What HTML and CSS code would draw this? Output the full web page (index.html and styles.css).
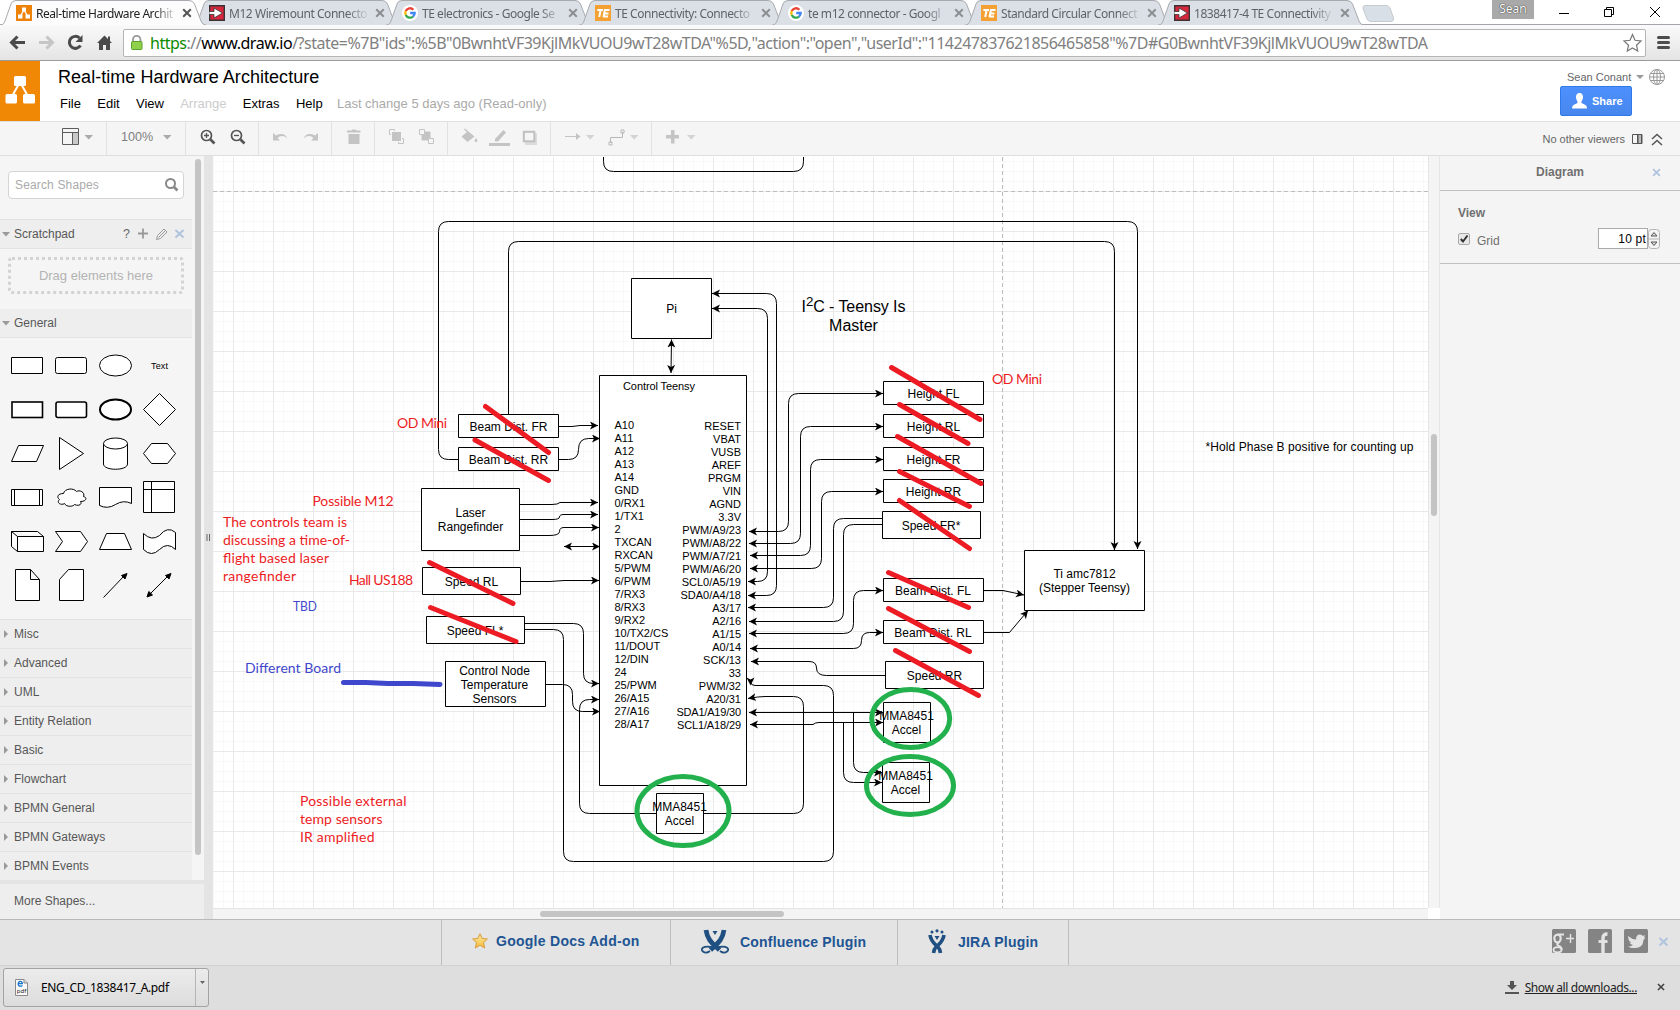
FILE: index.html
```html
<!DOCTYPE html>
<html lang="en">
<head>
<meta charset="utf-8">
<title>Real-time Hardware Architecture</title>
<link rel="stylesheet" href="styles.css">
</head>
<body>
<svg class="defs" width="0" height="0">
  <defs>
    <symbol id="tab-shape" viewBox="0 0 207 25"><path d="M0 25C3 25 4 23.500 5 21L11 4Q12 .5 16 .5H189Q193 .5 194.500 4L201 21Q202.500 25 206 25"/></symbol>
    <symbol id="x" viewBox="0 0 10 10"><path d="M1.200 1.200L8.800 8.800M8.800 1.200L1.200 8.800" fill="none" stroke="currentColor" stroke-width="2"/></symbol>
    <symbol id="fav-drawio" viewBox="0 0 16 16"><path fill="#ee8108" d="M0 0H16V16H0z"/><path stroke="#fff" stroke-width="1.300" fill="none" d="M8 5L4.500 11M8 5L11.500 11"/><path fill="#fff" d="M6 2.500h4v4H6zM2 9.500h4.500v4H2zM9.500 9.500H14v4H9.500z"/></symbol>
    <symbol id="fav-digikey" viewBox="0 0 16 16"><path fill="#d8263c" stroke="#3b3236" stroke-width="1.400" d="M.7.7H15.300V15.300H.7z"/><path fill="#fff" stroke="#3b3236" stroke-width=".8" d="M0 6.500H5V3L13.500 8L5 13V9.500H0z"/></symbol>
    <symbol id="fav-google" viewBox="0 0 16 16"><circle cx="8" cy="8" r="8" fill="#fff"/><g fill="none" stroke-width="2.300"><path stroke="#ea4335" d="M3.700 6.100A4.700 4.700 0 0 1 11.400 4.700"/><path stroke="#fbbc05" d="M3.800 10.100A4.700 4.700 0 0 1 3.700 6"/><path stroke="#34a853" d="M11.100 11.500A4.700 4.700 0 0 1 3.700 10"/><path stroke="#4285f4" d="M8.200 8H12.700A4.700 4.700 0 0 1 11 11.600"/></g></symbol>
    <symbol id="fav-te" viewBox="0 0 16 16"><path fill="#f4a032" d="M0 0H16V16H0z"/><path fill="none" stroke="#fff" stroke-width="2" d="M2.300 5H8M5.600 5L4.200 12M8.500 12L9.900 5H14.500M9.200 8.500H13.500M8.100 11.500H13"/></symbol>
    <marker id="arr" markerUnits="userSpaceOnUse" markerWidth="10" markerHeight="10" refX="8" refY="4" orient="auto-start-reverse"><path d="M0 0L8 4L0 8L2 4z"/></marker>
    <pattern id="grid" x="233" y="231" width="40" height="40" patternUnits="userSpaceOnUse">
      <path d="M10.500 0V40M20.500 0V40M30.500 0V40M0 10.500H40M0 20.500H40M0 30.500H40" stroke="#f8f8f8"/>
      <path d="M.5 0V40M0 .5H40" stroke="#e9e9e9"/>
    </pattern>
    <linearGradient id="gold" x2="0" y2="1"><stop stop-color="#fff0a0"/><stop offset="1" stop-color="#f3b93a"/></linearGradient>
  </defs>
</svg>
<div class="window">
  <div class="tabstrip">
    <div class="tab active"><svg class="shape"><use href="#tab-shape"/></svg><svg class="fav"><use href="#fav-drawio"/></svg><span class="label">Real-time Hardware Archit</span><svg class="close"><use href="#x"/></svg></div>
    <div class="tab"><svg class="shape"><use href="#tab-shape"/></svg><svg class="fav"><use href="#fav-digikey"/></svg><span class="label">M12 Wiremount Connecto</span><svg class="close"><use href="#x"/></svg></div>
    <div class="tab"><svg class="shape"><use href="#tab-shape"/></svg><svg class="fav"><use href="#fav-google"/></svg><span class="label">TE electronics - Google Se</span><svg class="close"><use href="#x"/></svg></div>
    <div class="tab"><svg class="shape"><use href="#tab-shape"/></svg><svg class="fav"><use href="#fav-te"/></svg><span class="label">TE Connectivity: Connecto</span><svg class="close"><use href="#x"/></svg></div>
    <div class="tab"><svg class="shape"><use href="#tab-shape"/></svg><svg class="fav"><use href="#fav-google"/></svg><span class="label">te m12 connector - Googl</span><svg class="close"><use href="#x"/></svg></div>
    <div class="tab"><svg class="shape"><use href="#tab-shape"/></svg><svg class="fav"><use href="#fav-te"/></svg><span class="label">Standard Circular Connect</span><svg class="close"><use href="#x"/></svg></div>
    <div class="tab"><svg class="shape"><use href="#tab-shape"/></svg><svg class="fav"><use href="#fav-digikey"/></svg><span class="label">1838417-4 TE Connectivity</span><svg class="close"><use href="#x"/></svg></div>
    <svg class="newtab" width="34" height="18"><path d="M4 .5H25Q28 .5 29 3L32.500 13Q33 16.500 30 16.500H10Q7 16.500 6 14L2 3.500Q1.500 .5 4 .5z" fill="#d9dfe6" stroke="#c6cbd0"/></svg>
    <div class="user-badge">Sean</div>
    <svg class="winbtns" width="146" height="24" viewBox="1534 0 146 24" fill="none" stroke="#000"><path d="M1559 13.500H1569M1604.500 9.500H1611.500V16.500H1604.500zM1606.500 9.500V7.500H1613.500V14.500H1611.500M1650 7L1660 17M1660 7L1650 17"/></svg>
  </div>
  <div class="navbar">
    <svg width="123" height="35" viewBox="0 25 123 35" fill="none">
      <path d="M25 42.500H12M17.500 36.500L11.500 42.500L17.500 48.500" stroke="#4a4a4a" stroke-width="3"/>
      <path d="M39 42.500H52M46.500 36.500L52.500 42.500L46.500 48.500" stroke="#c6c6c6" stroke-width="3"/>
      <path d="M80.500 45.500A6 6 0 1 1 79.500 38" stroke="#4a4a4a" stroke-width="3"/><path d="M82.500 35V42H75.500z" fill="#4a4a4a"/>
      <path d="M97 43L104.500 35.500L108 39V36.500H110V41L112 43H110V50H106V45H103V50H99V43z" fill="#4a4a4a"/>
    </svg>
    <div class="omnibox">
      <svg width="26" height="26" viewBox="124 30 26 26"><path d="M133 42V39.500a3.700 3.700 0 0 1 7.400 0V42" fill="none" stroke="#999" stroke-width="1.800"/><rect x="131.500" y="41.500" width="10.500" height="8" rx="1" fill="#8fd14a" stroke="#5aa02c"/></svg>
      <span class="url"><b class="ok">https</b>://<b class="host">www.draw.io</b>/?state=%7B"ids":%5B"0BwnhtVF39KjlMkVUOU9wT28wTDA"%5D,"action":"open","userId":"114247837621856465858"%7D#G0BwnhtVF39KjlMkVUOU9wT28wTDA</span>
      <svg class="fav-star" width="26" height="26" viewBox="1618 30 26 26"><path d="M1631.500 34.500L1634 40.300L1640 41L1635.500 45.200L1636.700 51L1631.500 48L1626.300 51L1627.500 45.200L1623 41L1629 40.300z" fill="#fff" stroke="#777" stroke-width="1.200"/></svg>
    </div>
    <svg width="34" height="35" viewBox="1646 25 34 35"><path d="M1658.500 37.500H1668.500M1658.500 42.500H1668.500M1658.500 47.500H1668.500" stroke="#4d4d4d" stroke-width="3" stroke-linecap="round"/></svg>
  </div>

  <header class="apphead">
    <svg class="logo" width="40" height="60" viewBox="0 61 40 60"><path fill="#f08705" d="M0 61H40V121H0z"/><path d="M20 82L11 98M20 82L29 98" stroke="#fff" stroke-width="2"/><path fill="#fff" d="M15.500 76h9q1.500 0 1.500 1.500v7q0 1.500-1.500 1.500h-9q-1.500 0-1.500-1.500v-7q0-1.500 1.500-1.500zM7 94h8.500q1.500 0 1.500 1.500v6.500q0 1.500-1.500 1.500H7q-1.500 0-1.500-1.500v-6.500Q5.500 94 7 94zM24.500 94H33.500q1.500 0 1.500 1.500v6.500q0 1.500-1.500 1.500H24.500q-1.500 0-1.500-1.500v-6.500q0-1.500 1.500-1.500z"/></svg>
    <div class="titles">
      <h1>Real-time Hardware Architecture</h1>
      <nav><span>File</span><span>Edit</span><span>View</span><span class="off">Arrange</span><span>Extras</span><span>Help</span><span class="status">Last change 5 days ago (Read-only)</span></nav>
    </div>
    <div class="account">
      <div class="who"><span>Sean Conant</span><svg width="8" height="4"><path d="M0 0H8L4 4z" fill="#999"/></svg><svg class="globe" width="16" height="16" fill="none" stroke="#999"><circle cx="8" cy="8" r="7.500"/><ellipse cx="8" cy="8" rx="3.500" ry="7.500"/><path d="M8 .5V15.500M.5 8H15.500M2 4.500H14M2 11.500H14"/></svg></div>
      <div class="share"><svg width="15" height="16"><path d="M7.500 0c2.500 0 3.500 2 3.500 4 0 2-1 3.500-1.500 4.500v1.500l4 2q1.500.8 1.500 3.500H0Q0 12.800 1.500 12l4-2V8.500C5 7.500 4 6 4 4 4 2 5 0 7.500 0z" fill="#fff"/></svg>Share</div>
    </div>
  </header>

  <div class="toolbar">
    <div class="grp"><svg width="106" height="33" viewBox="0 122 106 33"><path d="M62.500 128.500H78.500V144.500H62.500zM62.500 132.500H78.500M72.500 132.500V144.500" fill="none" stroke="#5c5c5c"/><path d="M73 133H78V144H73z" fill="#c8c8c8"/><path d="M84.500 135H93L88.700 139.500z" fill="#aaa"/></svg></div>
    <div class="grp zoomlvl"><span>100%</span><svg width="9" height="5"><path d="M0 0H8.500L4.200 4.500z" fill="#aaa"/></svg></div>
    <div class="grp"><svg width="72" height="33" viewBox="186 122 72 33" fill="none" stroke="#555" stroke-width="1.700"><circle cx="206.500" cy="135.500" r="5"/><path d="M210.500 139.500L214.500 143.500" stroke-width="2.600"/><path d="M204 135.500h5M206.500 133v5" stroke-width="1.300"/><circle cx="236.500" cy="135.500" r="5"/><path d="M240.500 139.500L244.500 143.500" stroke-width="2.600"/><path d="M234 135.500h5" stroke-width="1.300"/></svg></div>
    <div class="grp"><svg width="72" height="33" viewBox="259 122 72 33" fill="#c4c4c4"><path d="M273 133V140.500H280L277.500 138Q282 134 287.500 138.500Q284 131.500 276 135.500z"/><path d="M318 133V140.500H311L313.500 138Q309 134 303.500 138.500Q307 131.500 315 135.500z"/></svg></div>
    <div class="grp"><svg width="42" height="33" viewBox="332 122 42 33" fill="#c4c4c4"><path d="M347 130.500H351.500L352.500 129.500H355.500L356.500 130.500H360.500V132.500H347zM348.500 134H359.500V144H348.500z"/></svg></div>
    <div class="grp"><svg width="72" height="33" viewBox="375 122 72 33" fill="#f5f5f5" stroke="#c4c4c4"><path d="M389.500 129.500h5v5h-5zM398.500 138.500h5v5h-5z"/><path d="M392.500 132.500h8v8h-8z" fill="#c4c4c4" stroke="#f5f5f5" stroke-width="3"/><path d="M392 132h9v9h-9z" fill="#c4c4c4" stroke="none"/><path d="M422 132h8v8h-8z" fill="#c4c4c4"/><path d="M419.500 129.500h5v5h-5zM428.500 138.500h5v5h-5z"/></svg></div>
    <div class="grp"><svg width="102" height="33" viewBox="448 122 102 33" fill="#c4c4c4"><path d="M465 128.500L474.500 136.500L467.500 142L461.500 136.500L467 132L464 129.500zM476 138q3 4 0 4t0-4z"/><path d="M489 143H510V146H489z"/><path d="M495 139V141.500H498L506 132.500L503.500 130z"/><path d="M525 133h12v12H525z" fill="#dcdcdc"/><rect x="523.800" y="131.800" width="10.500" height="9.500" fill="#f5f5f5" stroke="#c0c0c0" stroke-width="2"/></svg></div>
    <div class="grp"><svg width="100" height="33" viewBox="551 122 100 33" fill="#c4c4c4"><path d="M565 136H576V133L580.500 136.500L576 140V137H565z"/><path d="M586 135H594.500L590.200 139.500zM630 135H638.500L634.200 139.500z" opacity=".7"/><path d="M610.500 143V137.500H622.500V132M609 142h3v3h-3zM621 130h3v3h-3z" fill="none" stroke="#b8b8b8"/></svg></div>
    <div class="grp last"><svg width="50" height="33" viewBox="652 122 50 33" fill="#c4c4c4"><path d="M671 130h3.500v5H679v3.500h-4.500v5H671v-5h-5V135h5z"/><path d="M687 135H695.500L691.200 139.500z" opacity=".7"/></svg></div>
    <span class="viewers">No other viewers</span>
    <svg class="tail" width="54" height="33" viewBox="1626 122 54 33" fill="none" stroke="#555"><path d="M1638 134.500H1642V143.500H1638z" fill="#bbb"/><path d="M1632.500 134.500H1641.500V143.500H1632.500zM1637.500 134.500V143.500"/><path d="M1652 139L1657 134.500L1662 139M1652 145L1657 140.500L1662 145" stroke-width="1.500"/></svg>
  </div>

  <main class="work">
    <aside class="sidebar">
      <div class="scroller">
        <div class="palette">
          <div class="search"><span>Search Shapes</span><svg width="14" height="14" fill="none" stroke="#888"><circle cx="5.500" cy="5.500" r="4.500" stroke-width="2"/><path d="M8.500 8.500L12.500 12.500" stroke-width="2.600"/></svg></div>
          <div class="sec open scratch"><svg class="tri" width="8" height="5"><path d="M0 0H8L4 4.500z" fill="#999"/></svg><span>Scratchpad</span><svg class="acts" width="64" height="20" viewBox="122 223 64 20" fill="none" stroke="#999"><path d="M138 232.500H148M143 227.500V237.500" stroke-width="1.800"/><path d="M156.500 238.500L157.500 234.500L164 228L167 231L160.500 237.500zM158.500 236.500L165 230"/><path d="M175.500 229L183.500 236.500M183.500 229L175.500 236.500" stroke="#b0c4de" stroke-width="2"/><text x="123" y="237" font-size="12.500" fill="#666" stroke="none">?</text></svg></div>
          <div class="drop">Drag elements here</div>
          <div class="sec open general"><svg class="tri" width="8" height="5"><path d="M0 0H8L4 4.500z" fill="#999"/></svg><span>General</span></div>
          <svg class="shapes" width="192" height="281" viewBox="0 338 192 281" fill="#fff" stroke="#000">
            <path d="M11.500 357.500H42.500V373.500H11.500z"/><rect x="55.500" y="357.500" width="31" height="16" rx="2"/><ellipse cx="115.500" cy="365.500" rx="16" ry="10.500"/><text x="151" y="369" font-size="9" fill="#000" stroke="none" textLength="17">Text</text>
            <rect x="12" y="402" width="30.500" height="15.500" stroke-width="1.600"/><rect x="56" y="402" width="30.500" height="15.500" rx="2" stroke-width="1.600"/><ellipse cx="115.500" cy="409.500" rx="15.500" ry="10" stroke-width="2"/><path d="M159.500 393.500L175.500 409.500L159.500 425.500L143.500 409.500z"/>
            <path d="M18.500 445.500H43.500L36.500 461.500H11.500zM59.500 437.500L83.500 453.500L59.500 469.500z"/><path d="M103.500 443.500V464c0 7 24 7 24 0V443.500"/><ellipse cx="115.500" cy="443.500" rx="12" ry="5.500"/><path d="M151.500 443.500H167.500L175.500 453.500L167.500 463.500H151.500L143.500 453.500z"/>
            <path d="M11.500 489.500H42.500V505.500H11.500zM14.500 489.500V505.500M39.500 489.500V505.500"/><path d="M63.500 493.500c-6 0-7 4-4 6-4 4 3 6 5 4 2 4 9 3 10 1 4 2 8 0 6-3 6 0 7-4 3-5 2-4-4-7-7-5-3-4-12-3-13 2z"/><path d="M99.500 487.500H131.500V503.500Q123.500 499.500 115.500 504.500Q107.500 509.500 99.500 505.500z"/><path d="M143.500 481.500H174.500V512.500H143.500zM151.500 481.500V512.500M143.500 489.500H174.500"/>
            <path d="M11.500 531.500H37.500L43.500 536.500V551.500H17.500L11.500 546.500zM11.500 531.500L17.500 536.500H43.500M17.500 536.500V551.500M55.500 531.500H80.500L87.500 541.500L80.500 551.500H55.500L62.500 541.500zM106.500 533.500H124.500L131.500 549.500H99.500zM143.500 533.500Q151.500 541.500 159.500 535.500Q167.500 525.500 175.500 532.500V549.500Q167.500 541.500 159.500 549.500Q151.500 557.500 143.500 549.500z"/>
            <path d="M15.500 569.500H30.500L39.500 579.500V600.500H15.500zM30.500 569.500V579.500H39.500M68.500 569.500H83.500V600.500H59.500V579.500zM103.500 597.500L124 576M149 595L168 576"/><path d="M127 573.500L125 579L121.500 575.500zM171 573.500L169 579L165.500 575.500zM147 597L148.800 591.500L152.500 595z" fill="#000"/>
          </svg>
          <div class="sec"><i></i>Misc</div><div class="sec"><i></i>Advanced</div><div class="sec"><i></i>UML</div><div class="sec"><i></i>Entity Relation</div><div class="sec"><i></i>Basic</div><div class="sec"><i></i>Flowchart</div><div class="sec"><i></i>BPMN General</div><div class="sec"><i></i>BPMN Gateways</div><div class="sec"><i></i>BPMN Events</div>
        </div>
        <div class="vbar"><div class="thumb"></div></div>
      </div>
      <div class="more">More Shapes...</div>
    </aside>
    <div class="split"><svg width="5" height="8"><path d="M1 0V7M3.500 0V7" stroke="#666"/></svg></div>
    <section class="canvas">
      <svg class="diagram" width="1215" height="751" viewBox="213 157 1215 751">
        <path d="M213 157H1428V908H213z" fill="url(#grid)"/>
        <path d="M213 191.500H1428M1002.500 157V908" stroke="#bdbdbd" stroke-dasharray="4 3" fill="none"/>
        <path d="M600 376H746V785H600z" fill="#fff"/>
        <g class="wire">
          <path d="M603.500 150V161.500Q603.500 171.500 613.500 171.500H793.500Q803.500 171.500 803.500 161.500V150"/>
          <path d="M458.500 459.500H448.500Q438.500 459.500 438.500 449.500V231.500Q438.500 221.500 448.500 221.500H1127.500Q1137.500 221.500 1137.500 231.500V549" marker-end="url(#arr)"/>
          <path d="M508.500 414.500V251.500Q508.500 241.500 518.500 241.500H1104.500Q1114.500 241.500 1114.500 251.500V550" marker-end="url(#arr)"/>
          <g marker-start="url(#arr)" marker-end="url(#arr)">
            <path d="M671.500 339.500L671 373"/>
            <path d="M712 293.500H766.500Q776.500 293.500 776.500 303.500V585.500Q776.500 595.500 766.500 595.500H748"/>
            <path d="M712 308.500H757.500Q767.500 308.500 767.500 318.500V571.500Q767.500 581.500 757.500 581.500H748"/>
            <path d="M564 546.500H600"/>
            <path d="M883 393.500H798.500Q788.500 393.500 788.500 403.500V521.500Q788.500 531.500 778.500 531.500H749"/>
            <path d="M883 426.500H810.500Q800.500 426.500 800.500 436.500V533.500Q800.500 543.500 790.500 543.500H749"/>
            <path d="M883 459.500H820.500Q810.500 459.500 810.500 469.500V545.500Q810.500 555.500 800.500 555.500H750"/>
            <path d="M883 491.500H831.500Q821.500 491.500 821.500 501.500V558.500Q821.500 568.500 811.500 568.500H750"/>
            <path d="M883 590.500H863.500Q853.500 590.500 853.500 600.500V623.500Q853.500 633.500 843.500 633.500H749"/>
            <path d="M883 632.500H869.500Q861.500 632.500 861.500 640.500Q861.500 648.500 853.500 648.500H750"/>
            <path d="M883 712.500H749"/>
            <path d="M883 722.500H819Q815 722.500 813 724.500H750"/>
            <path d="M599 699.500H589.500Q579.500 699.500 579.500 709.500V803.500Q579.500 813.500 589.500 813.500H656.500" marker-end="none"/>
          </g>
          <g marker-end="url(#arr)">
            <path d="M558.500 426.500H572L580 425.500H598"/>
            <path d="M558.500 459.500H568.500Q578.500 459.500 578.500 449.500Q578.500 438.500 588.500 438.500H600"/>
            <path d="M519.500 504.500H552Q558 504.500 560 502.500H598"/>
            <path d="M519.500 519.500H552Q559.500 519.500 559.500 517Q559.500 514.500 564 514.500H598"/>
            <path d="M519.500 535.500H549Q559.500 535.500 559.500 531.500Q559.500 527.500 564 527.500H599"/>
            <path d="M520.500 581.500H550L564 580.500H599"/>
            <path d="M524.500 623.500H573.500Q583.500 623.500 583.500 633.500V673.500Q583.500 683.500 593.500 683.500H599"/>
            <path d="M545.500 684.500H562.500Q572.500 684.500 572.500 694.500V701.500Q572.500 711.500 582.500 711.500H600"/>
            <path d="M882.500 518.500H843.500Q833.500 518.500 833.500 528.500V597.500Q833.500 607.500 823.500 607.500H748"/>
            <path d="M882.500 524.500H853.500Q843.500 524.500 843.500 534.500V611.500Q843.500 621.500 833.500 621.500H749"/>
            <path d="M983.500 590.500H1003L1024 595"/>
            <path d="M983.500 632.500H1009.500L1028 610.500"/>
            <path d="M885.500 675.500H826.500Q816.500 675.500 816.500 668Q816.500 661.500 809 661.500H751"/>
            <path d="M853.500 712.500V762.500Q853.500 772.500 863.500 772.500H882"/>
            <path d="M843.500 722.500V772.500Q843.500 782.500 853.500 782.500H882"/>
            <path d="M703.500 813.500H793.500Q803.500 813.500 803.500 803.500V706.500Q803.500 696.500 793.500 696.500H765Q759 696.500 748 698.500"/>
          </g>
          <path d="M524.500 629.500H553.500Q563.500 629.500 563.500 639.500V851.500Q563.500 861.500 573.500 861.500H823.500Q833.500 861.500 833.500 851.500V695.500Q833.500 685.500 823.500 685.500H755Q751 685.500 750.500 682"/>
          <path d="M750.500 685.500L746.500 677.500L750.500 679.500L754.500 677.500z" fill="#000" stroke="none"/>
        </g>
        <g class="box">
          <path d="M631.500 278.500H711.500V338.500H631.500z"/>
          <path d="M599.500 375.500H746.500V785.500H599.500z" fill="none"/>
          <path d="M458.500 414.500h100v23h-100zM458.500 447.500h100v23h-100zM421.500 488.500h98v62h-98zM422.500 567.500h98v27h-98zM426.500 616.500h98v27h-98zM445.500 661.500h100v45h-100zM656.500 793.500h47v40h-47z"/>
          <path d="M883.500 381.500h100v23h-100zM883.500 414.500h100v23h-100zM883.500 447.500h100v23h-100zM883.500 479.500h100v23h-100zM882.500 511.500h98v27h-98zM883.500 578.500h100v23h-100zM883.500 620.500h100v23h-100zM885.500 661.500h98v27h-98zM1024.500 550.500h120v60h-120z"/>
          <path d="M883.500 702.500h47v40h-47zM882.500 762.500h47v40h-47z" fill="none"/>
        </g>
        <g class="t mid">
          <text x="671.500" y="312.500">Pi</text>
          <text x="508.500" y="430.700">Beam Dist. FR</text><text x="508.500" y="463.700">Beam Dist. RR</text>
          <text x="470.500" y="516.500">Laser</text><text x="470.500" y="530.500">Rangefinder</text>
          <text x="471.500" y="585.500">Speed RL</text><text x="475" y="634.500">Speed FL*</text>
          <text x="494.500" y="674.700">Control Node</text><text x="494.500" y="688.700">Temperature</text><text x="494.500" y="702.700">Sensors</text>
          <text x="679.500" y="811">MMA8451</text><text x="679.500" y="825">Accel</text>
          <text x="933.500" y="397.700">Height FL</text><text x="933.500" y="430.700">Height RL</text><text x="933.500" y="463.700">Height FR</text><text x="933.500" y="495.700">Height RR</text>
          <text x="931" y="529.700">Speed FR*</text><text x="933" y="594.700">Beam Dist. FL</text><text x="933" y="636.700">Beam Dist. RL</text><text x="934.500" y="679.700">Speed RR</text>
          <text x="906.500" y="720">MMA8451</text><text x="906.500" y="734">Accel</text><text x="905.500" y="780">MMA8451</text><text x="905.500" y="794">Accel</text>
          <text x="1084.500" y="577.700">Ti amc7812</text><text x="1084.500" y="591.700">(Stepper Teensy)</text>
          <text x="1309.500" y="450.700" textLength="208">*Hold Phase B positive for counting up</text>
          <text x="853.500" y="312" class="big" textLength="104">I<tspan dy="-6" font-size="13.300">2</tspan><tspan dy="6">C - Teensy Is</tspan></text><text x="853.500" y="331" class="big">Master</text>
          <text x="659" y="390" class="sm" textLength="72">Control Teensy</text>
        </g>
        <text class="t sm" y="416.300"><tspan x="614.500" dy="13">A10</tspan><tspan x="614.500" dy="13">A11</tspan><tspan x="614.500" dy="13">A12</tspan><tspan x="614.500" dy="13">A13</tspan><tspan x="614.500" dy="13">A14</tspan><tspan x="614.500" dy="13">GND</tspan><tspan x="614.500" dy="13">0/RX1</tspan><tspan x="614.500" dy="13">1/TX1</tspan><tspan x="614.500" dy="13">2</tspan><tspan x="614.500" dy="13">TXCAN</tspan><tspan x="614.500" dy="13">RXCAN</tspan><tspan x="614.500" dy="13">5/PWM</tspan><tspan x="614.500" dy="13">6/PWM</tspan><tspan x="614.500" dy="13">7/RX3</tspan><tspan x="614.500" dy="13">8/RX3</tspan><tspan x="614.500" dy="13">9/RX2</tspan><tspan x="614.500" dy="13">10/TX2/CS</tspan><tspan x="614.500" dy="13">11/DOUT</tspan><tspan x="614.500" dy="13">12/DIN</tspan><tspan x="614.500" dy="13">24</tspan><tspan x="614.500" dy="13">25/PWM</tspan><tspan x="614.500" dy="13">26/A15</tspan><tspan x="614.500" dy="13">27/A16</tspan><tspan x="614.500" dy="13">28/A17</tspan></text>
        <text class="t sm end" y="417.300"><tspan x="741" dy="13">RESET</tspan><tspan x="741" dy="13">VBAT</tspan><tspan x="741" dy="13">VUSB</tspan><tspan x="741" dy="13">AREF</tspan><tspan x="741" dy="13">PRGM</tspan><tspan x="741" dy="13">VIN</tspan><tspan x="741" dy="13">AGND</tspan><tspan x="741" dy="13">3.3V</tspan><tspan x="741" dy="13">PWM/A9/23</tspan><tspan x="741" dy="13">PWM/A8/22</tspan><tspan x="741" dy="13">PWM/A7/21</tspan><tspan x="741" dy="13">PWM/A6/20</tspan><tspan x="741" dy="13">SCL0/A5/19</tspan><tspan x="741" dy="13">SDA0/A4/18</tspan><tspan x="741" dy="13">A3/17</tspan><tspan x="741" dy="13">A2/16</tspan><tspan x="741" dy="13">A1/15</tspan><tspan x="741" dy="13">A0/14</tspan><tspan x="741" dy="13">SCK/13</tspan><tspan x="741" dy="13">33</tspan><tspan x="741" dy="13">PWM/32</tspan><tspan x="741" dy="13">A20/31</tspan><tspan x="741" dy="13" textLength="64.500">SDA1/A19/30</tspan><tspan x="741" dy="13" textLength="64">SCL1/A18/29</tspan></text>
        <g class="redline">
          <path d="M485.500 406.500L548.500 452.500M475 440L548.500 480.500M429.500 562.500L513 603.500M430.500 607.500L516 641.500"/>
          <path d="M891.500 367.500L980 419.500M899.500 404.500L968 443.500M897.500 436.500L981 483.500M899.500 471.500L969.500 506.500M899.500 500.500L969.500 548.500M888.500 572.500L968.500 607.500M888.500 608.500L969.500 651.500M895.500 650.500L978.500 695.500"/>
        </g>
        <g class="greenline"><ellipse cx="683" cy="811" rx="46" ry="34.500"/><ellipse cx="910.700" cy="718.500" rx="39" ry="29"/><ellipse cx="910" cy="785.500" rx="43.500" ry="29"/></g>
        <path d="M343.500 682.400H366L388 683.400H413L440 684.500" stroke="#3f48cc" stroke-width="5" fill="none" stroke-linecap="round"/>
        <g class="note">
          <text x="397" y="427.800" textLength="50">OD Mini</text><text x="992" y="383.800" textLength="50">OD Mini</text>
          <text x="312.500" y="505.800" textLength="81">Possible M12</text>
          <text x="223" y="526.800" textLength="124">The controls team is</text><text x="223" y="544.800" textLength="127">discussing a time-of-</text><text x="223" y="562.800" textLength="106">flight based laser</text><text x="223" y="580.800" textLength="73">rangefinder</text>
          <text x="349" y="584.800" textLength="64">Hall US188</text>
          <text x="300" y="805.800" textLength="106.500">Possible external</text><text x="300" y="823.800" textLength="82.500">temp sensors</text><text x="300" y="841.800" textLength="74.500">IR amplified</text>
          <g class="blue"><text x="293" y="610.800" textLength="24" lengthAdjust="spacingAndGlyphs">TBD</text><text x="245" y="672.800" textLength="96">Different Board</text></g>
        </g>
      </svg>
      <div class="vscroll"><div class="thumb"></div></div>
      <div class="hscroll"><div class="thumb"></div></div>
      <div class="corner"></div>
    </section>
    <aside class="format">
      <div class="fhead">Diagram<svg width="9" height="9"><use href="#x"/></svg></div>
      <div class="fview">
        <strong>View</strong>
        <div class="row"><svg width="12" height="12"><rect x=".5" y=".5" width="11" height="11" rx="1.500" fill="#e8e8e8" stroke="#aaa"/><path d="M2.800 6L5 8.500L9.500 2.500" fill="none" stroke="#333" stroke-width="2"/></svg><span>Grid</span><div class="num">10 pt</div><svg class="spin" width="12" height="20"><rect x=".5" y=".5" width="11" height="19" rx="3" fill="#f4f4f4" stroke="#b5b5b5"/><path d="M0 10H12" stroke="#b5b5b5"/><path d="M3 7L6 3.500L9 7zM3 13L6 16.500L9 13z" fill="#ddd" stroke="#555"/></svg></div>
      </div>
    </aside>
  </main>

  <footer class="promo">
    <div class="lead"></div>
    <div class="plug docs"><svg width="16" height="16"><path d="M8 .8L10.200 5.500L15.400 6L11.500 9.600L12.700 15L8 12.200L3.300 15L4.500 9.600L.6 6L5.800 5.500z" fill="url(#gold)" stroke="#d89b3c"/></svg><span>Google Docs Add-on</span></div>
    <div class="plug conf"><svg width="28" height="26" viewBox="701 930 28 26" fill="none" stroke="#205081"><path d="M706 931C707.500 941 712 944 719.500 951M724 931C722.500 941 718 944 710.500 951" stroke-width="4.800"/><path d="M711 948C703 946.500 700 950 703 952.500Q706 955 710 952M719 948C727 946.500 730 950 727 952.500Q724 955 720 952" stroke-width="1.800"/><path d="M712.500 932H717.500L715 936z" fill="#205081" stroke="none"/></svg><span>Confluence Plugin</span></div>
    <div class="plug jira"><svg width="18" height="26" viewBox="928 930 18 26" fill="none" stroke="#205081"><path d="M930 936C931 943 935 945 938 948Q940 950 940.500 954M944 936C943 943 939 945 936 948Q934 950 933.500 954" stroke-width="3.600"/><g fill="#205081" stroke="none"><circle cx="932" cy="933" r="1.500"/><circle cx="937" cy="931.800" r="1.600"/><circle cx="942" cy="933" r="1.500"/><path d="M934.500 937H939.500L937 941z"/></g></svg><span>JIRA Plugin</span></div>
    <svg class="social" width="128" height="26" viewBox="1552 929 128 26">
      <g fill="#848484"><rect x="1552" y="929" width="24" height="24" rx="1.500"/><rect x="1588" y="929" width="24" height="24" rx="1.500"/><rect x="1624" y="929" width="24" height="24" rx="1.500"/></g>
      <g fill="none" stroke="#e4e4e4"><ellipse cx="1557.500" cy="938.500" rx="3.200" ry="3.800" stroke-width="2.200"/><path d="M1558 934.500H1564M1559 942.500Q1555.500 944 1559 946Q1562 947.500 1561.500 950" stroke-width="2"/><ellipse cx="1557.500" cy="949.800" rx="4" ry="2.600" stroke-width="1.800"/><path d="M1566 938.500H1574M1570.500 934V943" stroke-width="1.400"/><path d="M1603 953V938Q1603 933.800 1607.500 934" stroke-width="3.400"/><path d="M1598.500 941.500H1607.500" stroke-width="2.800"/></g>
      <path fill="#e4e4e4" d="M1628 936Q1632 939.500 1636 939.500Q1636 934.500 1640 934.500Q1642 934.500 1643 936L1645 935L1644 937.500L1645.500 937.500L1643.500 940Q1643 948 1635 948Q1631 948.500 1628 946.500Q1631 946.500 1633 945Q1630.500 944.500 1629.500 942.500H1631.500Q1628.500 941 1628.500 939z"/>
      <path d="M1659.500 938L1667.500 945.500M1667.500 938L1659.500 945.500" stroke="#b0c4de" stroke-width="2"/>
    </svg>
  </footer>
  <div class="downloads">
    <div class="dl"><svg width="13" height="17"><path d="M.5.5H9L12.500 4V16.500H.5z" fill="#fafafa" stroke="#8a8a8a"/><path d="M9 .5V4H12.500" fill="#ddd" stroke="#8a8a8a"/><path d="M3.200 4.700H7.400Q7.200 2.300 5.300 2.300T3.200 4.700T5.400 7.200Q6.600 7.200 7.400 6.500" fill="none" stroke="#1b76c8" stroke-width="1.300"/><text x="1.800" y="13.500" font-size="6" fill="#222">pdf</text></svg><span>ENG_CD_1838417_A.pdf</span><b><svg width="5" height="3"><path d="M0 0H5L2.500 3z" fill="#666"/></svg></b></div>
    <div class="all"><svg width="14" height="13"><path d="M5 0H9V4H12L7 9L2 4H5zM0 11H14V13H0z" fill="#555"/></svg><u>Show all downloads...</u><svg class="dx" width="8" height="8"><use href="#x"/></svg></div>
  </div>
</div>
</body>
</html>
```
FILE: styles.css
```css
* { box-sizing: border-box; }
body { margin: 0; font-family: "Liberation Sans", Arial, sans-serif; font-size: 12px; color: #000; overflow: hidden; }
svg { display: block; flex: none; }
.defs { position: absolute; }
.window { width: 1680px; height: 1010px; display: flex; flex-direction: column; background: #fff; }

/* browser chrome */
.tabstrip { height: 25px; display: flex; border-bottom: 1px solid #a2a6aa; flex: none; font-family: "Noto Sans", "Open Sans", sans-serif; }
.tab { position: relative; width: 207px; height: 25px; margin-right: -14px; flex: none; display: flex; align-items: center; padding: 1px 0 0 16px; color: #5e6368; }
.tab.active { z-index: 2; color: #222; }
.shape { position: absolute; left: 0; top: 0; width: 207px; height: 25px; fill: #dbe0e7; stroke: #a7abaf; }
.tab.active .shape { fill: #fcfcfc; }
.fav { position: relative; width: 16px; height: 16px; }
.label { position: relative; margin-left: 4px; width: 145px; font-size: 12px; letter-spacing: -.45px; white-space: nowrap; -webkit-mask-image: linear-gradient(90deg, #000 118px, transparent 141px); mask-image: linear-gradient(90deg, #000 118px, transparent 141px); }
.close { position: relative; width: 10px; height: 10px; margin-left: 1px; color: #8c8f92; }
.tab.active .close { color: #555; }
.newtab { margin: 5px 0 0 10px; }
.user-badge { margin-left: auto; width: 42px; height: 19px; background: #a9a9a9; color: #fff; font-size: 12px; line-height: 18px; text-align: center; text-shadow: 0 0 1px #333, 0 0 1px #333; }
.navbar { height: 36px; flex: none; display: flex; align-items: flex-start; background: linear-gradient(#fafafa, #e4e4e4); border-bottom: 1px solid #9c9c9c; }
.omnibox { width: 1523px; height: 28px; margin-top: 4px; border: 1px solid #b5b5b5; border-radius: 2px; background: #fff; display: flex; align-items: center; }
.url { font: 16px/26px "Noto Sans", "Open Sans", sans-serif; color: #808080; white-space: nowrap; letter-spacing: -.5px; padding-bottom: 1px; }
.url b { font-weight: normal; }
.url .ok { color: #0b8a00; }
.url .host { color: #000; }
.fav-star { margin-left: auto; }

/* application header */
.apphead { height: 61px; flex: none; display: flex; border-bottom: 1px solid #e0e0e0; }
.titles { padding: 5px 0 0 18px; flex: 1; }
h1 { margin: 0; font-size: 18px; font-weight: normal; line-height: 22px; letter-spacing: .04px; }
nav { display: flex; gap: 16.300px; font-size: 13px; line-height: 16px; padding: 8px 0 0 2px; }
.off { color: #ccc; }
.status { color: #aaa; margin-left: -2px; }
.account { width: 120px; color: #666; font-size: 11px; }
.who { display: flex; align-items: center; height: 25px; padding: 7px 0 0 7px; gap: 5px; white-space: nowrap; }
.globe { margin-left: 0; }
.share { display: flex; align-items: center; width: 72px; height: 30px; border: 1px solid #3079ed; border-radius: 2px; background: linear-gradient(#4d90fe, #4787ed); color: #fff; font-weight: bold; padding-left: 11px; gap: 5px; }
.toolbar { height: 34px; flex: none; display: flex; background: #f5f5f5; border-bottom: 1px solid #dfdfdf; }
.grp { border-right: 1px solid #e2e2e2; display: flex; align-items: center; }
.grp.last { border: 0; }
.zoomlvl { width: 79px; padding: 0 0 3px 14px; gap: 10px; color: #808080; font-size: 12.600px; }
.viewers { margin-left: auto; color: #666; font-size: 11px; line-height: 34px; }
.tail { margin-left: 1px; }

/* work area */
.work { flex: none; height: 763px; display: flex; }
.sidebar { width: 204px; background: #e4e4e4; display: flex; flex-direction: column; color: #575757; }
.scroller { height: 724px; display: flex; background: #f5f5f5; }
.palette { width: 192px; }
.search { margin: 15px 0 0 8px; width: 176px; height: 28px; border: 1px solid #d5d5d5; border-radius: 4px; background: #fff; display: flex; align-items: center; justify-content: space-between; padding: 0 4px 0 6px; color: #aaa; letter-spacing: .15px; }
.sec { height: 29px; background: #eee; border-top: 1px solid #e3e3e3; display: flex; align-items: center; padding-left: 4px; }
.sec i { border: 4px solid transparent; border-left: 4px solid #999; border-right: 0; margin-right: 6px; }
.sec.open { height: 30px; padding-left: 2px; border-bottom: 1px solid #e3e3e3; }
.tri { margin-right: 4px; }
.scratch { margin-top: 20px; }
.acts { margin-left: auto; margin-right: 6px; }
.drop { margin: 8px 0 0 8px; width: 176px; height: 37px; border: 3px dotted #d3d3d3; border-radius: 4px; font-size: 13px; line-height: 31px; text-align: center; color: #b3b3b3; }
.sec.general { margin-top: 15px; height: 29px; border-top-color: #eee; padding-bottom: 1px; }
.shapes { height: 281px; }
.vbar { width: 12px; padding: 3px 0 0 3px; background: #f5f5f5; }
.thumb { background: #c4c4c4; border-radius: 3px; }
.vbar .thumb { width: 6px; height: 696px; }
.more { height: 35px; margin-top: 4px; background: #eee; line-height: 34px; padding-left: 14px; }
.split { width: 9px; background: #e4e4e4; display: flex; align-items: center; justify-content: center; }
.canvas { width: 1227px; display: grid; grid-template-columns: 1215px 12px; grid-template-rows: 752px 11px; background: #fff; }
.diagram { margin-top: 1px; }
.vscroll, .hscroll { background: #f4f4f4; }
.vscroll { border-left: 1px solid #e6e6e6; border-right: 1px solid #e6e6e6; padding: 278px 0 0 2px; }
.vscroll .thumb { width: 6px; height: 82px; }
.hscroll { border-top: 1px solid #e4e4e4; padding: 2px 0 0 327px; }
.hscroll .thumb { width: 244px; height: 6px; }
.format { width: 240px; background: #f4f4f4; color: #707070; }
.fhead { height: 35px; border-bottom: 1px solid #c0c0c0; font-weight: bold; text-align: center; line-height: 32px; position: relative; }
.fhead svg { position: absolute; right: 19px; top: 12px; color: #b0c4de; }
.fview { height: 73px; border-bottom: 1px solid #c0c0c0; padding: 15px 20px 0 18px; }
.fview strong { display: block; line-height: 14px; }
.row { display: flex; align-items: center; margin-top: 8px; }
.row span { margin: 4px auto 0 7px; }
.num { width: 50px; height: 21px; border: 1px solid #aaa; background: #fff; color: #000; text-align: right; line-height: 20px; padding-right: 1px; letter-spacing: .2px; }

/* diagram */
.wire { fill: none; stroke: #000; }
.box { fill: #fff; stroke: #000; }
.t { font-size: 12px; fill: #000; }
.mid { text-anchor: middle; }
.end { text-anchor: end; }
.sm { font-size: 11px; }
.big { font-size: 16px; }
.redline { fill: none; stroke: #ed1c24; stroke-width: 5; stroke-linecap: round; }
.greenline { fill: none; stroke: #22b14c; stroke-width: 5; }
.note { font: 14px Lato, sans-serif; fill: #ed1c24; }
.blue { fill: #3f48cc; }

/* footer */
.promo { height: 47px; flex: none; display: flex; background: #e4e4e4; border-top: 1px solid #b9b9b9; border-bottom: 1px solid #d2d2d2; }
.lead { width: 442px; border-right: 1px solid #bdbdbd; }
.plug { display: flex; align-items: center; border-right: 1px solid #bdbdbd; color: #205493; font-size: 14px; font-weight: bold; letter-spacing: .2px; white-space: nowrap; }
.docs { width: 229px; padding: 0 0 4px 30px; gap: 8px; letter-spacing: .27px; }
.conf { width: 227px; padding: 0 0 2px 30px; gap: 11px; }
.jira { width: 171px; padding: 0 0 2px 30px; gap: 12px; }
.social { margin: 9px 0 0 auto; }
.downloads { height: 44px; flex: none; display: flex; justify-content: space-between; background: #dedede; font-family: "Noto Sans", "Open Sans", sans-serif; }
.dl { width: 206px; height: 39px; margin: 2px 0 0 3px; border: 1px solid #a3a3a3; border-radius: 3px; background: linear-gradient(#ececec, #dcdcdc); display: flex; align-items: center; padding-left: 11px; }
.dl span { margin-left: 13px; letter-spacing: -.35px; }
.dl b { margin-left: auto; width: 13px; height: 37px; border-left: 1px solid #b5b5b5; padding: 12px 0 0 4px; }
.all { display: flex; align-items: center; padding-right: 15px; height: 42px; color: #222; }
.all u { margin: 0 20px 0 6px; letter-spacing: -.4px; }
.dx { color: #444; }
```
